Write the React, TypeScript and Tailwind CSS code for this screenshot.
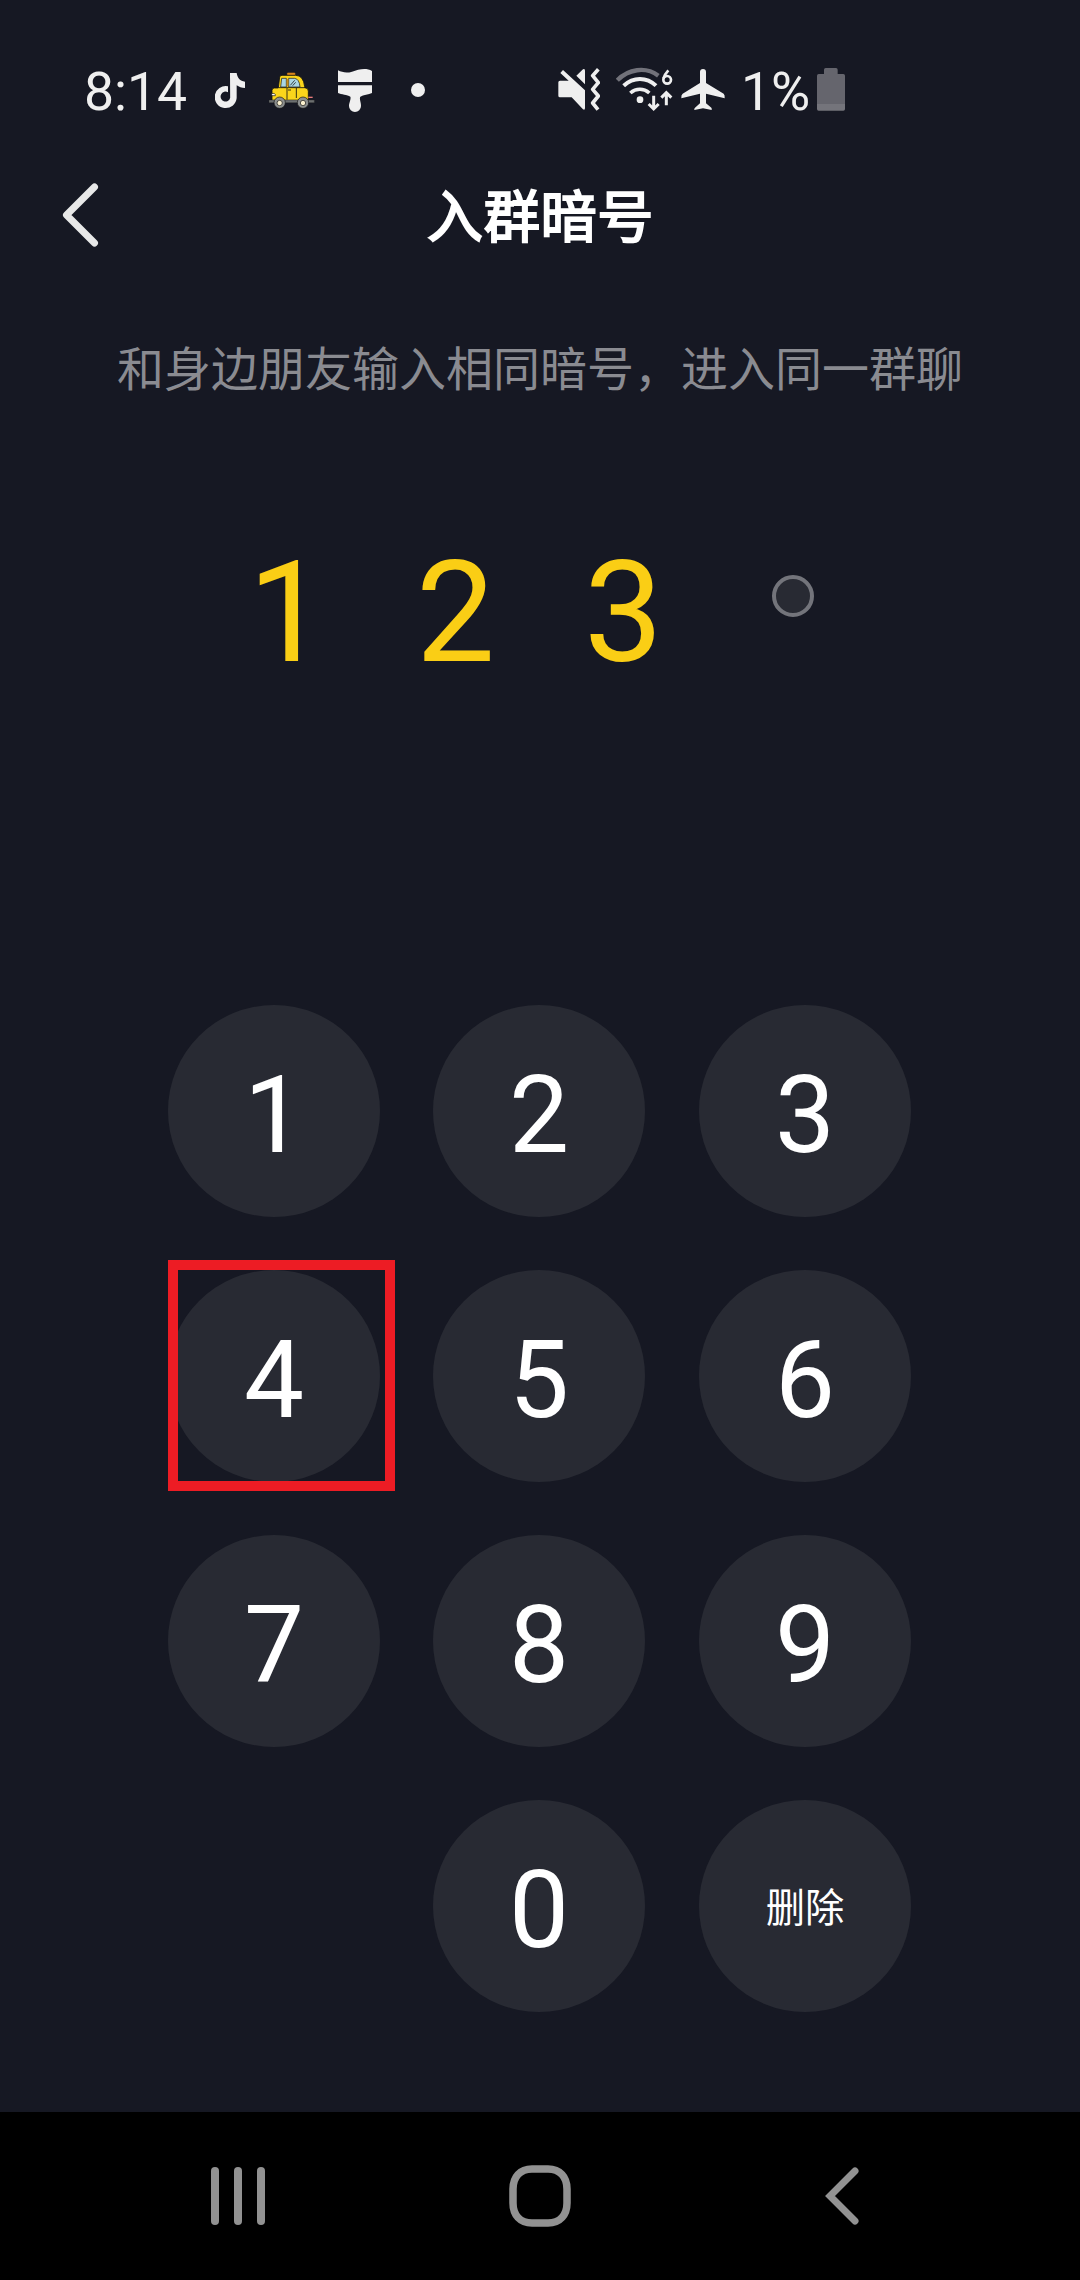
import React from "react";

const ICON = "h-20 shrink-0";

function NoteIcon() {
  return (
    <svg className={`${ICON} ml-[28px] w-[30px]`} viewBox="435 0 90 240" fill="#efefef">
      <path d="M480 69H500C502 84 510 93 525 95V114C515 114 507 111 500 106V144A33 33 0 1 1 474 109V127A14.5 15 0 1 0 480.500 143Z" />
    </svg>
  );
}

function TaxiIcon() {
  return (
    <svg className={`${ICON} ml-[23px] w-[47px]`} viewBox="207 -30 141 240">
      <rect x="264" y="38" width="25" height="8" rx="3" fill="#e08a1e" stroke="#5a3a10" strokeWidth="1" />
      <path
        d="M238 84L242 51Q243 46 249 46H290Q313 46 317 80L318 84H320Q328 84 328 94V121H219V91Q219 84 226 84Z"
        fill="#fbd51b"
        stroke="#111"
        strokeWidth="2.500"
      />
      <path d="M245 81L248 55H262V81ZM269 81V55H287Q301 57 303 81Z" fill="#a9d5e2" stroke="#111" strokeWidth="2" />
      <path d="M263 57h5v22h-5z" fill="#c98a1b" />
      <path d="M274 76L287 61M281 77L290 67" stroke="#222" strokeWidth="2.500" />
      <path d="M264 84V119M292 84V114M240 83H318" stroke="#111" strokeWidth="2.500" />
      <path d="M267 90h9" stroke="#111" strokeWidth="2.500" />
      <path d="M217 101Q230 98 229 107H219Z" fill="#fff" stroke="#111" strokeWidth="2" />
      <path d="M328 112h13" stroke="#e87b7b" strokeWidth="4" />
      <path d="M210 120H346V128H210Z" fill="#6c6f70" stroke="#222" strokeWidth="1" />
      <g stroke="#111" strokeWidth="2">
        <circle cx="242" cy="128" r="17" fill="#8c8f8f" />
        <circle cx="312" cy="128" r="17" fill="#8c8f8f" />
        <circle cx="242" cy="129" r="8" fill="#fbf1cf" />
        <circle cx="312" cy="129" r="8" fill="#fbf1cf" />
      </g>
    </svg>
  );
}

function BrushIcon() {
  return (
    <svg className={`${ICON} ml-[23px] w-[34px]`} viewBox="54 0 102 240" fill="#efefef">
      <path d="M54 61C66 67 80 70 96 65C116 58 138 52 156 63V96H54Z" />
      <path d="M54 106H156V129C146 134 130 134 121 140C117 146 124 158 123 168A18 18 0 0 1 87 168C87 158 94 146 91 140C82 134 64 134 54 129Z" />
    </svg>
  );
}

function MuteVibrateIcon() {
  return (
    <svg className={`${ICON} ml-[133px] w-[42px]`} viewBox="54 0 126 240">
      <path
        d="M60 92H86L61 69L69 60L135 121V174Q135 181 129 178L95 142H60Q55 142 55 137V97Q55 92 60 92ZM109 77L129 58Q135 55 135 62V103Z"
        fill="#efefef"
      />
      <path d="M175 58L158 77L175 98L158 118L175 138L158 159L174 179" fill="none" stroke="#efefef" strokeWidth="11" strokeLinejoin="round" />
    </svg>
  );
}

function WifiIcon() {
  return (
    <svg className={`${ICON} ml-[16px] w-[57px]`} viewBox="228 0 171 240" fill="none">
      <path d="M232 91C264 58 316 48 355 77" stroke="#72727a" strokeWidth="13" />
      <g stroke="#efefef">
        <path d="M251 107C280 80 320 80 348 107" strokeWidth="12" />
        <path d="M271 129C288 114 311 114 328 129" strokeWidth="11" />
        <path d="M341 137V174M326 162L341 177L356 162M379 166V130M364 143L379 128L394 143" strokeWidth="9" />
        <circle cx="381.500" cy="89.500" r="11.500" strokeWidth="8" />
        <path d="M370 86Q373 74 385 61" strokeWidth="8" />
      </g>
      <circle cx="300" cy="149" r="10" fill="#efefef" />
    </svg>
  );
}

function PlaneIcon() {
  return (
    <svg className={`${ICON} ml-[8px] w-[44px]`} viewBox="423 0 132 240" fill="#efefef">
      <path d="M480 66A9 9 0 0 1 498 66V99L551 131Q555 134 554 145L498 131V160L514 173Q516 175 515 180L489 175L463 180Q462 175 465 173L480 160V131L424 145Q423 134 428 131L480 99Z" />
    </svg>
  );
}

function BatteryIcon() {
  return (
    <svg className={`${ICON} ml-[8px] w-[28px]`} viewBox="291 0 84 240">
      <path d="M317 54H348Q353 54 353 59V72H370Q375 72 375 77V163H291V77Q291 72 296 72H312V59Q312 54 317 54Z" fill="#65656d" />
      <path d="M291 162H375V177Q375 182 370 182H296Q291 182 291 177Z" fill="#74747b" />
    </svg>
  );
}

function StatusBar() {
  return (
    <div className="flex h-[130px] items-center pt-[50px] pl-[84px] text-[53.5px] leading-[80px] text-[#efefef]">
      <span className="w-[103px] pt-[4px] whitespace-nowrap">8:14</span>
      <NoteIcon />
      <TaxiIcon />
      <BrushIcon />
      <span className="ml-[39px] size-[14px] rounded-full bg-[#efefef]" />
      <MuteVibrateIcon />
      <WifiIcon />
      <PlaneIcon />
      <span className="ml-[16px] w-[68px] pt-[4px] whitespace-nowrap">1%</span>
      <BatteryIcon />
    </div>
  );
}

function Key({ label, selected = false }: { label: string; selected?: boolean }) {
  const isDigit = label.length === 1;
  return (
    <button
      className={`relative flex size-[212px] items-center justify-center rounded-full bg-[#282a33] leading-none text-white ${
        isDigit ? "pt-[11px] text-[106.9px]" : "pt-[5px] text-[39.375px]"
      }`}
    >
      {label}
      {selected && <span className="absolute -top-[10px] left-0 h-[231px] w-[227px] border-[10px] border-[#ed1c24]" />}
    </button>
  );
}

export default function App() {
  return (
    <div className="flex h-[2280px] w-[1080px] flex-col overflow-hidden bg-[#161823] font-['Roboto','Noto_Sans_CJK_SC',sans-serif]">
      <StatusBar />
      <header className="grid h-[170px] grid-cols-[160px_1fr_160px] items-center">
        <button className="pl-[62px]" aria-label="返回">
          <svg className="h-[66px] w-[38px]" viewBox="0 0 38 66" fill="none" stroke="#e8e8e8" strokeWidth="7" strokeLinecap="round" strokeLinejoin="round">
            <path d="M32.500 5L4.500 33L32.500 61" />
          </svg>
        </button>
        <h1 className="pt-[5px] pl-[1px] text-center text-[56.25px] leading-[80px] font-normal tracking-[0.6px] text-white [-webkit-text-stroke:2px_white]">入群暗号</h1>
      </header>
      <p className="mt-[37px] h-[66px] text-center text-[47px] leading-[66px] whitespace-nowrap text-[#8a8b91]">
        和身边朋友输入相同暗号，进入同一群聊
      </p>
      <div className="mt-[127px] ml-[203.5px] grid h-[166px] w-[672px] grid-cols-4 items-center text-center text-[140.6px] leading-[166px] text-[#face15]">
        <span>1</span>
        <span>2</span>
        <span>3</span>
        <span className="mr-[62px] mb-[34px] size-[42px] justify-self-end rounded-full border-4 border-[#73747b] bg-[#282a33]" />
      </div>
      <div className="mt-[309px] ml-[168px] grid w-[743px] grid-cols-[265px_266px_212px] gap-y-[53px]">
        {["1", "2", "3", "4", "5", "6", "7", "8", "9"].map((n) => (
          <Key key={n} label={n} selected={n === "4"} />
        ))}
        <span />
        <Key label="0" />
        <Key label="删除" />
      </div>
      <nav className="mt-auto flex h-[168px] items-center bg-black pb-px pl-[211px]">
        <div className="flex h-[58px] gap-[15px]">
          <span className="w-[8px] rounded-full bg-[#929292]" />
          <span className="w-[8px] rounded-full bg-[#929292]" />
          <span className="w-[8px] rounded-full bg-[#929292]" />
        </div>
        <svg className="ml-[244px] size-[62px]" viewBox="0 0 62 62" fill="none" stroke="#929292" strokeWidth="7.500">
          <path d="M23 4H39C51 4 58 12 58 24V38C58 50 51 58 39 58H23C11 58 4 50 4 38V24C4 12 11 4 23 4Z" />
        </svg>
        <svg className="ml-[253.5px] h-[58px] w-[35px]" viewBox="0 0 35 58" fill="none" stroke="#929292" strokeWidth="7" strokeLinecap="round">
          <path d="M30 4L5 29L30 54" />
        </svg>
      </nav>
    </div>
  );
}
